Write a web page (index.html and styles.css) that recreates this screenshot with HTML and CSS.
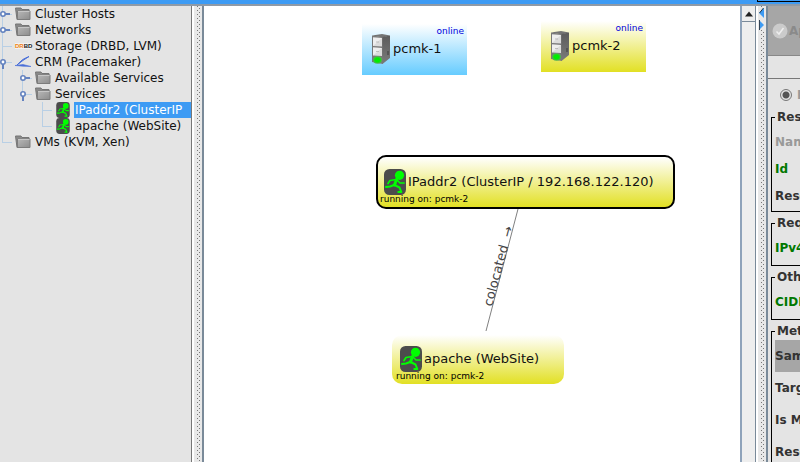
FILE: index.html
```html
<!DOCTYPE html>
<html lang="en">
<head>
<meta charset="utf-8">
<title>Cluster management</title>
<link rel="stylesheet" href="styles.css">
</head>
<body>
<svg class="defs" width="0" height="0" aria-hidden="true">
  <defs>
    <linearGradient id="gFolder" x1="0" y1="0" x2="1" y2="1">
      <stop offset="0" stop-color="#b8b8b8"/><stop offset="1" stop-color="#8c8c8c"/>
    </linearGradient>
    <linearGradient id="gSide" x1="0" y1="0" x2="0" y2="1">
      <stop offset="0" stop-color="#5c5c5c"/><stop offset="1" stop-color="#7a7a7a"/>
    </linearGradient>
    <radialGradient id="gLed"><stop offset="0.5" stop-color="#00ee00"/><stop offset="1" stop-color="#55b055"/></radialGradient>
    <symbol id="folder" viewBox="0 0 16 14">
      <path d="M.5 1h5.500l1 1.500h7v10h-12z" fill="#8a8a8a" stroke="#757575"/>
      <path d="M2.500 4h12.500v8.500h-12.500z" fill="url(#gFolder)" stroke="#7c7c7c"/>
      <path d="M3 4.500h11.500" stroke="#c6c6c6"/>
    </symbol>
    <symbol id="closed" viewBox="0 0 12 16">
      <path d="M5 8h5" stroke="#6382bf" stroke-width="2"/>
      <circle cx="3" cy="8" r="2.200" fill="#fff" stroke="#6382bf" stroke-width="1.600"/>
    </symbol>
    <symbol id="open" viewBox="0 0 12 16">
      <path d="M3 10v5" stroke="#6382bf" stroke-width="2"/>
      <circle cx="3" cy="8" r="2.200" fill="#fff" stroke="#6382bf" stroke-width="1.600"/>
    </symbol>
    <symbol id="runner" viewBox="0 0 22 26">
      <rect width="22" height="26" rx="5.500" fill="#4c4c4c"/>
      <circle cx="15.500" cy="6.300" r="4.600" fill="#0f0"/>
      <g fill="none" stroke="#0f0" stroke-linecap="round" stroke-linejoin="round">
        <path d="M12.500 10.500l-2 5.500" stroke-width="3"/>
        <path d="M12 10.500l-6 1-2 3M13 11l3 3h4" stroke-width="1.700"/>
        <path d="M10 16l-4 1.500-4 .5M10.500 16l5 2.500 1.800 4.500h-3" stroke-width="2"/>
      </g>
    </symbol>
    <symbol id="server" viewBox="0 0 20 32">
      <path d="M1 2.500l10-1.500 8 1.500-7 2z" fill="#747474"/>
      <path d="M1 2.500l11 1.500v27l-11-2z" fill="#787878"/>
      <path d="M11.500 4l7.500-1.500v22.500l-7.500 6z" fill="url(#gSide)"/>
      <path d="M2 4.500l9 .5v8.500l-9-.5zM2 14.500l9 .5v8l-9-.5z" fill="#dcdcdc"/>
      <path d="M2 4.500l9 .5-9 8zM2 14.500l9 .5-9 7.500z" fill="#eee"/>
      <path d="M5 9h3M5 18.500h3" stroke="#aaa" stroke-width=".7"/>
      <path d="M17 18v4" stroke="#4c4c4c" stroke-width="1.500"/>
      <ellipse cx="6.500" cy="27" rx="4.500" ry="3.700" fill="url(#gLed)"/>
    </symbol>
  </defs>
</svg>

<header class="topbar"><div class="tab-edge"></div></header>
<main class="split">
  <nav class="tree" aria-label="Cluster">
    <ul>
      <li><div class="row"><button class="handle" aria-label="Expand"><svg><use href="#closed"/></svg></button><svg class="icon"><use href="#folder"/></svg><span class="label">Cluster Hosts</span></div></li>
      <li><div class="row"><button class="handle" aria-label="Expand"><svg><use href="#closed"/></svg></button><svg class="icon"><use href="#folder"/></svg><span class="label">Networks</span></div></li>
      <li><div class="row"><span class="handle"></span><span class="icon drbd"><b>DR</b>BD</span><span class="label">Storage (DRBD, LVM)</span></div></li>
      <li>
        <div class="row"><button class="handle" aria-label="Collapse"><svg><use href="#open"/></svg></button><svg class="icon" viewBox="0 0 16 14"><path d="M14 1.500q-7 2-12 8.500 6-5 12-8.500z" fill="#7b98e6" stroke="#4a6fd8"/><path d="M0 10.500l8-1 8 2-8-.3z" fill="#4a6fd8" stroke="#4a6fd8" stroke-width=".6"/></svg><span class="label">CRM (Pacemaker)</span></div>
        <ul>
          <li><div class="row"><button class="handle" aria-label="Expand"><svg><use href="#closed"/></svg></button><svg class="icon"><use href="#folder"/></svg><span class="label">Available Services</span></div></li>
          <li>
            <div class="row"><button class="handle" aria-label="Collapse"><svg><use href="#open"/></svg></button><svg class="icon"><use href="#folder"/></svg><span class="label">Services</span></div>
            <ul>
              <li><div class="row"><span class="handle"></span><svg class="icon tall"><use href="#runner"/></svg><span class="label selected">IPaddr2 (ClusterIP</span></div></li>
              <li><div class="row"><span class="handle"></span><svg class="icon tall"><use href="#runner"/></svg><span class="label">apache (WebSite)</span></div></li>
            </ul>
          </li>
        </ul>
      </li>
      <li><div class="row"><span class="handle"></span><svg class="icon"><use href="#folder"/></svg><span class="label">VMs (KVM, Xen)</span></div></li>
    </ul>
  </nav>
  <div class="divider"><span class="grip"></span></div>

  <section class="canvas" aria-label="Services graph">
    <svg class="edges">
      <path d="M314 203L282 325" stroke="#808080"/>
      <text transform="translate(288 301) rotate(-75)">colocated &#160;→</text>
    </svg>
    <div class="node host host1"><svg><use href="#server"/></svg><span>pcmk-1</span><small>online</small></div>
    <div class="node host host2"><svg><use href="#server"/></svg><span>pcmk-2</span><small>online</small></div>
    <div class="node service service1"><svg><use href="#runner"/></svg><span>IPaddr2 (ClusterIP / 192.168.122.120)</span><small>running on: pcmk-2</small></div>
    <div class="node service service2"><svg><use href="#runner"/></svg><span>apache (WebSite)</span><small>running on: pcmk-2</small></div>
  </section>

  <div class="scroll"><button aria-label="Scroll up"><svg width="10" height="6"><path d="M1 5.500L5 0.500L9 5.500z" fill="#222"/></svg></button></div>
  <div class="divider"><span class="grip"></span>
    <div class="arrows">
      <button aria-label="Collapse left"><svg width="5" height="10"><path d="M5 0v10L0 5z" fill="#3d9bf4"/><path d="M4.500 0L.5 5" stroke="#234"/></svg></button>
      <button aria-label="Collapse right"><svg width="5" height="10"><path d="M0 0v10L5 5z" fill="#3d9bf4"/><path d="M.5 0v10" stroke="#345"/></svg></button>
    </div>
  </div>

  <aside class="options">
    <div class="toolbar"><button class="apply" disabled><svg width="16" height="16"><circle cx="8" cy="8" r="7.500" fill="#cbcbcb"/><path d="M4.500 8.500l2.500 2.500 4.500-6" fill="none" stroke="#eee" stroke-width="1.500"/></svg>Apply</button></div>
    <form class="form">
      <label class="mode"><input type="radio" name="mode" checked disabled>Info</label>
      <fieldset><legend>Resource</legend><p class="dim">Name</p><p class="req">Id</p><p>Resource</p></fieldset>
      <fieldset class="single"><legend>Required</legend><p class="req">IPv4</p></fieldset>
      <fieldset class="single"><legend>Other</legend><p class="req">CIDR</p></fieldset>
      <fieldset class="meta"><legend>Meta</legend><p class="same">Same</p><p>Target</p><p>Is Managed</p><p>Resource</p></fieldset>
    </form>
  </aside>
</main>
</body>
</html>
```
FILE: styles.css
```css
* { box-sizing: border-box; }
body {
  margin: 0;
  height: 100vh;
  overflow: hidden;
  display: flex;
  flex-direction: column;
  background: #e4e4e4;
  color: #111;
  font: 12px/16px "DejaVu Sans", sans-serif;
}
button { padding: 0; border: 0; background: none; font: inherit; color: inherit; }
svg { display: block; flex: none; }
.defs { position: absolute; }
.topbar {
  flex: none;
  height: 6px;
  background: #3d9bf4;
  border-bottom: 2px solid #8f9aa6;
}
.tab-edge {
  width: 43px;
  height: 2px;
  margin-left: auto;
  border: solid #000;
  border-width: 0 0 1px 1px;
}
.split {
  flex: 1;
  min-height: 0;
  display: grid;
  grid-template-columns: 192px 12px 1fr 16px 12px 32px;
  grid-template-rows: minmax(0, 1fr);
}

.tree { border-right: 1px solid #777; overflow: hidden; }
.tree ul { margin: 0; padding: 0; list-style: none; }
.tree ul ul { padding-left: 20px; }
.tree li { background: linear-gradient(#b8cfe5, #b8cfe5) 2px 0 / 1px 100% no-repeat; }
.tree li:last-child { background-size: 1px 8px; }
.row {
  display: flex;
  align-items: center;
  height: 16px;
  white-space: nowrap;
  background: linear-gradient(#b8cfe5, #b8cfe5) 2px 8px / 10px 1px no-repeat;
}
.handle { flex: none; width: 15px; height: 16px; }
.handle svg { width: 12px; height: 16px; }
.icon { width: 16px; height: 14px; }
.icon.tall { height: 16px; }
.label { flex: 1; margin-left: 3px; padding-left: 1px; }
.selected { background: #3d9bf4; color: #fff; overflow: hidden; }
.drbd {
  flex: none;
  height: 6px;
  background: #f2f2f2;
  font: bold 6px/6px "Liberation Sans", sans-serif;
  color: #222;
}
.drbd b { color: #f08010; }

.divider {
  position: relative;
  padding-left: 3px;
  background: #e8e8e8;
  border-left: 2px solid #fff;
  border-right: 2px solid #7a8a99;
}
.grip {
  display: block;
  height: 100%;
  width: 3px;
  background:
    conic-gradient(from 270deg at 1px 1px, #777 25%, transparent 0) 0 0 / 4px 4px,
    conic-gradient(from 270deg at 1px 1px, #777 25%, transparent 0) 2px 2px / 4px 4px;
}
.arrows { position: absolute; top: 2px; left: 1px; display: grid; gap: 2px; background: #e8e8e8; }

.canvas { position: relative; overflow: hidden; background: #fff; }
.edges { position: absolute; inset: 0; width: 100%; height: 100%; }
.edges text { font-size: 13px; fill: #444; }
.node { position: absolute; display: flex; align-items: center; gap: 2px; white-space: nowrap; font-size: 13px; }
.node small { position: absolute; font-size: 9px; line-height: 12px; }
.host { width: 105px; height: 51px; padding: 0 0 2px 9px; background: linear-gradient(#fff, #e2e024); }
.host svg { width: 20px; height: 32px; }
.host small { top: 1px; right: 3px; color: #00d; }
.host1 { left: 158px; top: 18px; background: linear-gradient(#fff, #66ccff); }
.host2 { left: 337px; top: 15px; }
.service { height: 49px; padding: 0 0 2px 8px; border-radius: 10px; background: linear-gradient(#fff, #e2e024); }
.service svg { width: 22px; height: 26px; }
.service small { left: 4px; bottom: 2px; color: #000; }
.service1 { left: 172px; top: 149px; width: 299px; height: 54px; padding: 0 0 0 6px; border: 2px solid #000; }
.service1 small { left: 2px; }
.service2 { left: 188px; top: 329px; width: 172px; }

.scroll { background: #eee; border-left: 2px solid #8fa3ba; border-right: 1px solid #7a8a99; }
.scroll button { display: grid; place-items: center; width: 100%; height: 16px; border-bottom: 1px solid #7a8a99; }

.options { overflow: hidden; white-space: nowrap; font-weight: bold; color: #333; }
.toolbar { height: 50px; padding: 17px 0 0 4px; background: #a6a6a6; border-bottom: 1px solid #888; }
.apply { display: flex; align-items: center; gap: 1px; color: #8a8a8a; font-weight: bold; }
.form { margin-top: 22px; padding: 8px 0 0 3px; border-top: 1px solid #777; }
.mode { display: flex; align-items: center; gap: 5px; height: 16px; padding-left: 9px; color: #999; }
.mode input {
  appearance: none;
  flex: none;
  width: 12px;
  height: 12px;
  margin: 0;
  border: 1px solid #777;
  border-radius: 50%;
  background: radial-gradient(#555 0 3px, transparent 4px);
}
fieldset { min-width: 160px; margin: 0 0 3px; padding: 4px 0 1px 3px; border: 1px solid #000; }
fieldset:first-of-type { margin-top: 6px; }
legend { padding: 0 2px; }
fieldset p { margin: 0; line-height: 27px; }
.dim { color: #999; }
.req { color: #007800; }
.single { padding-bottom: 3px; }
.meta { height: 200px; padding-top: 1px; }
.meta p { line-height: 32px; }
.meta .same { background: #a6a6a6; }
```
